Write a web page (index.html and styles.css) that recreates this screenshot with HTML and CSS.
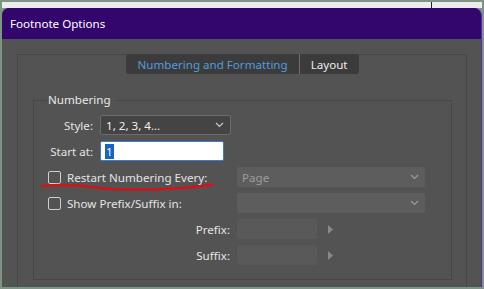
FILE: index.html
```html
<!DOCTYPE html>
<html lang="en">
<head>
    <meta charset="UTF-8">
    <meta name="viewport" content="width=device-width, initial-scale=1.0">
    <title>Footnote Options</title>
    <link rel="stylesheet" href="styles.css">
</head>
<body>
    <div class="frame">
        <div class="strip"><span class="tick"></span></div>

        <div class="dialog">
            <div class="titlebar">Footnote Options</div>

            <div class="dialog-body">
                <div class="panel">
                    <div class="tabs">
                        <span class="tab active">Numbering and Formatting</span>
                        <span class="tab">Layout</span>
                    </div>

                    <fieldset class="group">
                        <legend>Numbering</legend>

                        <div class="row">
                            <span class="lbl short">Style:</span>
                            <div class="select style-select">
                                <span>1, 2, 3, 4...</span>
                                <svg class="chev" width="9" height="6" viewBox="0 0 9 6"><path d="M1 1 L4.5 4.5 L8 1" fill="none" stroke="currentColor" stroke-width="1.2"/></svg>
                            </div>
                        </div>

                        <div class="row">
                            <span class="lbl short">Start at:</span>
                            <div class="textbox"><span class="sel">1</span></div>
                        </div>

                        <div class="row">
                            <label class="lbl wide check"><span class="box"></span>Restart Numbering Every:</label>
                            <div class="select off">
                                <span>Page</span>
                                <svg class="chev" width="9" height="6" viewBox="0 0 9 6"><path d="M1 1 L4.5 4.5 L8 1" fill="none" stroke="currentColor" stroke-width="1.2"/></svg>
                            </div>
                            <!-- red pen mark under the label -->
                            <svg class="scribble" width="176" height="12" viewBox="0 0 176 12">
                                <path d="M2 6 C 20 4, 40 5, 60 8 C 85 11, 110 10, 140 8 C 155 7, 165 6, 172 5" fill="none" stroke="#d4121c" stroke-width="2.4" stroke-linecap="round"/>
                            </svg>
                        </div>

                        <div class="row">
                            <label class="lbl wide check"><span class="box"></span>Show Prefix/Suffix in:</label>
                            <div class="select off">
                                <span></span>
                                <svg class="chev" width="9" height="6" viewBox="0 0 9 6"><path d="M1 1 L4.5 4.5 L8 1" fill="none" stroke="currentColor" stroke-width="1.2"/></svg>
                            </div>
                        </div>

                        <div class="row">
                            <span class="lbl wide right">Prefix:</span>
                            <div class="field off"></div>
                            <svg class="arrow" width="6" height="9" viewBox="0 0 6 9"><path d="M0 0 L5 4.5 L0 9 Z" fill="currentColor"/></svg>
                        </div>

                        <div class="row">
                            <span class="lbl wide right">Suffix:</span>
                            <div class="field off"></div>
                            <svg class="arrow" width="6" height="9" viewBox="0 0 6 9"><path d="M0 0 L5 4.5 L0 9 Z" fill="currentColor"/></svg>
                        </div>
                    </fieldset>
                </div>
            </div>
        </div>
    </div>
</body>
</html>
```

FILE: styles.css
```css
* {
    margin: 0;
    padding: 0;
    box-sizing: border-box;
}
body {
    background-color: #7e9585;
    font-family: "Noto Sans", "Open Sans", sans-serif;
    font-size: 11.6px;
    color: #e4e4e4;
}
.frame {
    width: 484px;
    height: 289px;
    padding: 2px 2px 2px 2px;
    overflow: hidden;
}

/* light strip above the dialog */
.strip {
    height: 6px;
    background-color: #ececec;
    position: relative;
}
.tick {
    position: absolute;
    left: 429px;
    top: 0;
    width: 1px;
    height: 6px;
    background-color: #222;
}

.dialog {
    height: 279px;
    width: 480px;
    border-radius: 7px 8px 0 0;
    border-right: 1px solid #5a2aa0;
    overflow: hidden;
    background-color: #535353;
    display: flex;
    flex-direction: column;
}
.titlebar {
    height: 31px;
    flex-shrink: 0;
    background-color: #33066e;
    color: #fff;
    padding-left: 8px;
    display: flex;
    align-items: center;
    font-size: 11.6px;
}
.dialog-body {
    padding: 15px 14px 0 15px;
}

.panel {
    border: 1px solid #474747;
    height: 300px;
    display: flex;
    flex-direction: column;
    padding: 0 14px 0 15px;
}
.tabs {
    align-self: center;
    margin-top: -1px;
    display: flex;
    height: 20px;
    background-color: #3b3b3b;
    border-radius: 3px;
}
.tab {
    display: flex;
    align-items: center;
    padding: 0 11px;
    color: #ececec;
}
.tab.active {
    color: #539bdf;
    border-right: 1px solid #707070;
}

.group {
    margin-top: 18px;
    border: 1px solid #474747;
    padding: 7px 14px 14px 14px;
    display: flex;
    flex-direction: column;
    gap: 6px;
}
.group legend {
    margin-left: 0;
    padding: 0 4px 0 0;
    line-height: 16px;
    color: #e8e8e8;
}

.row {
    display: flex;
    align-items: center;
    height: 20px;
    position: relative;
}
.lbl {
    flex-shrink: 0;
    white-space: nowrap;
}
.lbl.short {
    width: 52px;
    padding-right: 7px;
    text-align: right;
}
.lbl.wide {
    width: 189px;
}
.lbl.right {
    text-align: right;
    padding-right: 7px;
}
.check {
    display: flex;
    align-items: center;
}
.box {
    width: 13px;
    height: 13px;
    border: 1px solid #cfcfcf;
    border-radius: 2px;
    margin-right: 6px;
}

.select {
    height: 20px;
    display: flex;
    align-items: center;
    justify-content: space-between;
    padding: 0 6px 0 5px;
    border-radius: 2px;
}
.style-select {
    width: 131px;
    background-color: #444;
    border: 1px solid #6c6c6c;
    color: #f0f0f0;
}
.select.off {
    width: 188px;
    background-color: #5d5d5d;
    color: #9c9c9c;
}
.chev {
    color: #c8c8c8;
}
.select.off .chev {
    color: #9a9a9a;
}

.textbox {
    width: 124px;
    height: 20px;
    background-color: #fff;
    border: 1px solid #3a7bd0;
    border-radius: 2px;
    padding-left: 4px;
    display: flex;
    align-items: center;
}
.sel {
    background-color: #1763c6;
    color: #fff;
    line-height: 15px;
    padding: 0 1px;
}

.field {
    width: 80px;
    height: 20px;
    border-radius: 2px;
}
.field.off {
    background-color: #595959;
}
.arrow {
    margin-left: 11px;
    color: #888;
}

.scribble {
    position: absolute;
    left: -8px;
    top: 13px;
}
```
